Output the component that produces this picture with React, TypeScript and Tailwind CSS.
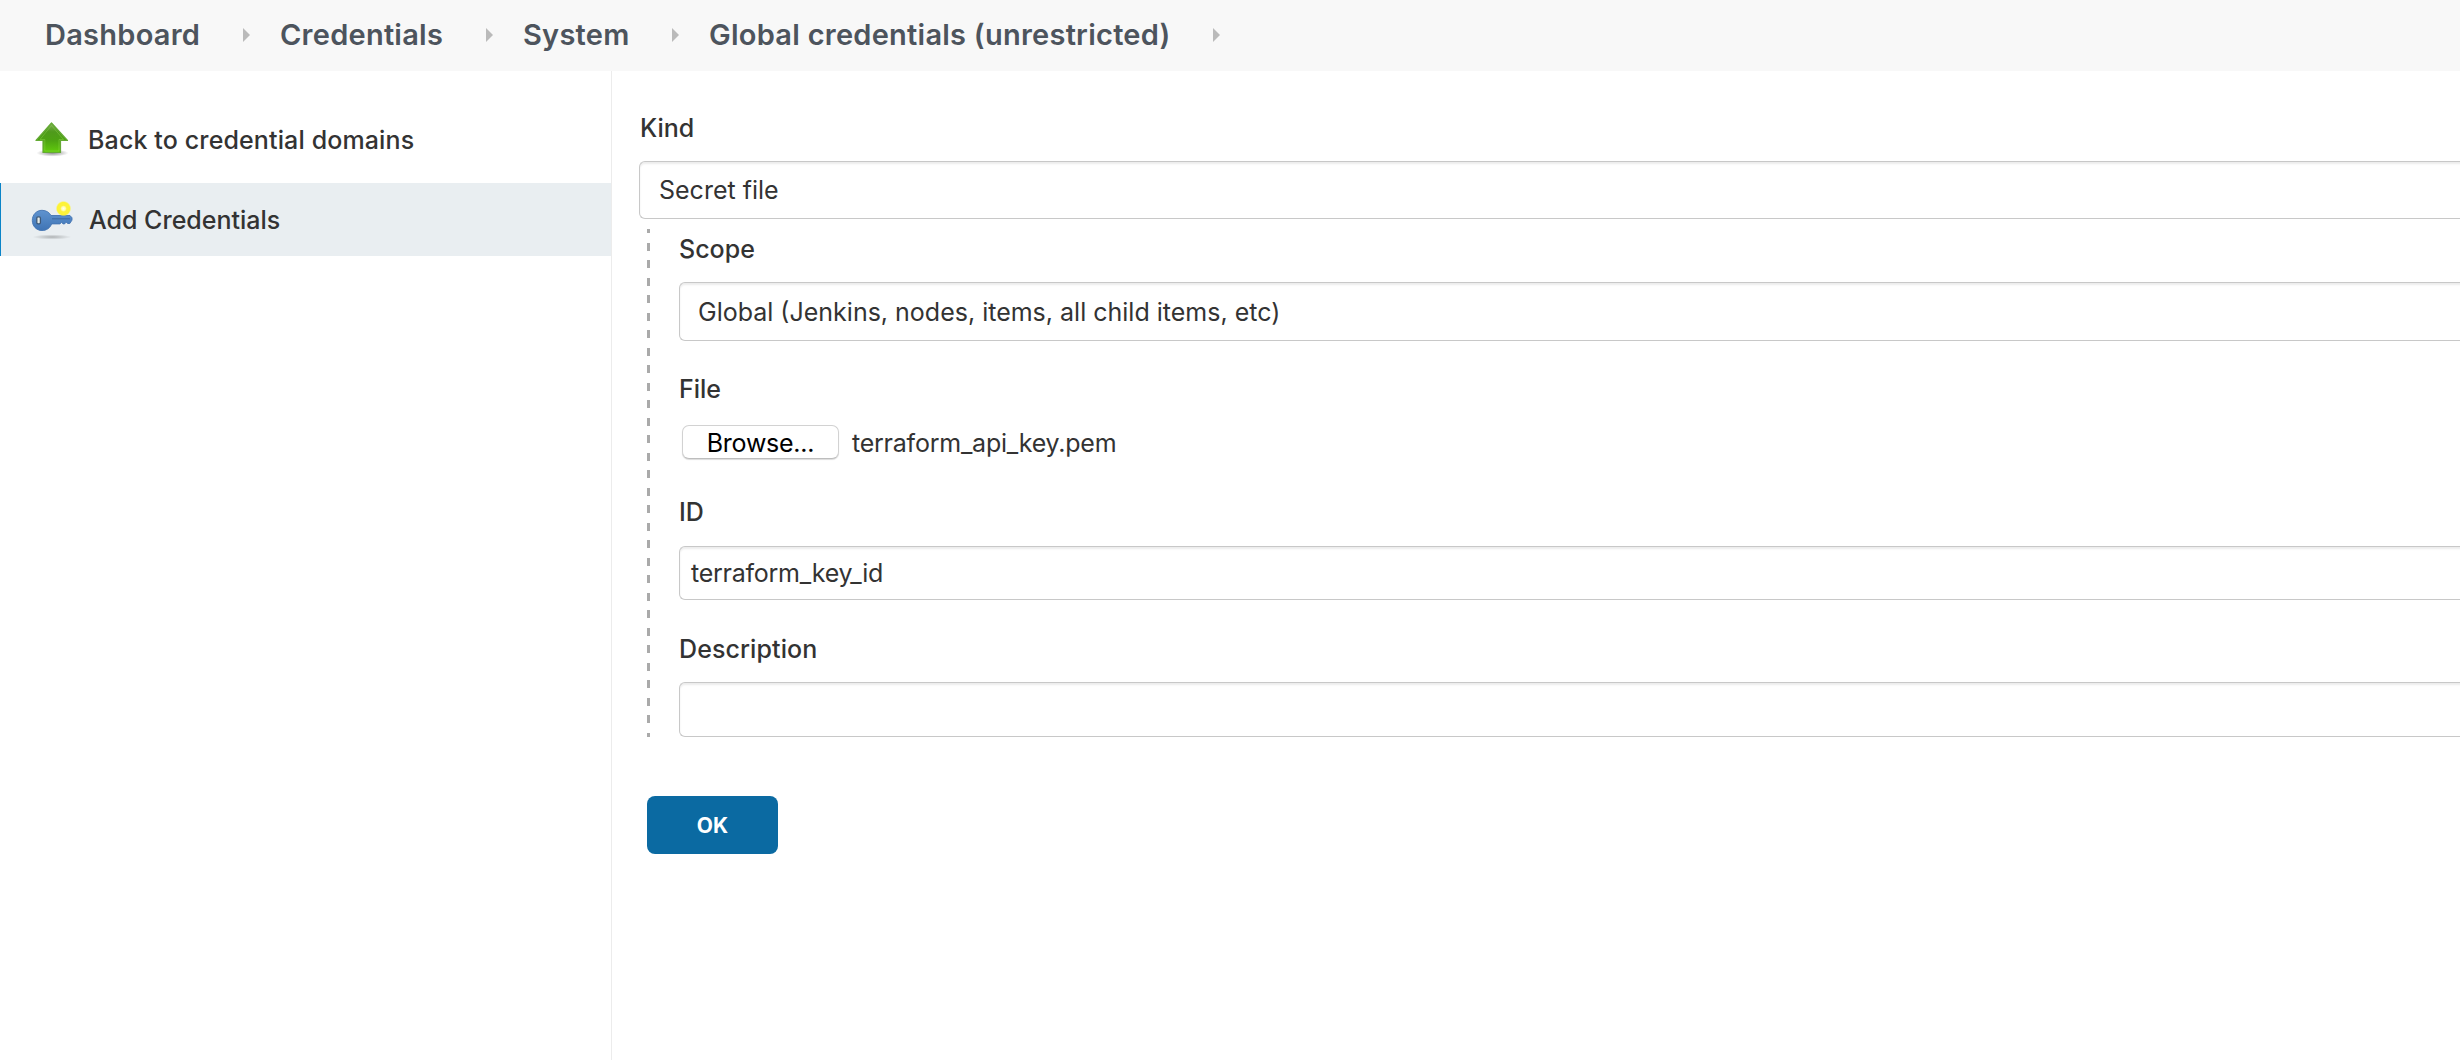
import React from 'react';

const crumbs = [
  { label: 'Dashboard', width: 'w-[198px]' },
  { label: 'Credentials', width: 'w-[206px]' },
  { label: 'System', width: 'w-[149px]' },
  { label: 'Global credentials (unrestricted)', width: 'w-[504px]' },
];

function UpArrowIcon() {
  return (
    <svg width="40" height="40" viewBox="0 0 40 40" className="shrink-0">
      <defs>
        <linearGradient id="arrowBody" x1="0" y1="0" x2="0" y2="1">
          <stop offset="0" stopColor="#7dad55" />
          <stop offset="0.3" stopColor="#4f9a1c" />
          <stop offset="0.6" stopColor="#4da312" />
          <stop offset="1" stopColor="#62cc0c" />
        </linearGradient>
        <radialGradient id="arrowShade">
          <stop offset="0" stopColor="#000" stopOpacity="0.45" />
          <stop offset="1" stopColor="#000" stopOpacity="0" />
        </radialGradient>
      </defs>
      <ellipse cx="20.5" cy="33" rx="16" ry="3.6" fill="url(#arrowShade)" />
      <path d="M19.5 3 L35.500 20.500 H28.500 V32.500 H11 V20.500 H4 Z" fill="url(#arrowBody)" stroke="#64aa34" strokeWidth="1.2" strokeLinejoin="round" />
      <path d="M12.800 31 V19.500 H8 L19.500 5.500 L31.500 19.500 H27 V31 Z" fill="none" stroke="#9be05a" strokeOpacity="0.35" strokeWidth="1" />
    </svg>
  );
}

function KeyIcon() {
  return (
    <svg width="42" height="42" viewBox="0 0 42 42" className="shrink-0">
      <defs>
        <linearGradient id="keyBody" x1="0" y1="0" x2="0" y2="1">
          <stop offset="0" stopColor="#5f93cf" />
          <stop offset="1" stopColor="#3f74b5" />
        </linearGradient>
        <radialGradient id="keyStar">
          <stop offset="0" stopColor="#fffff0" />
          <stop offset="0.25" stopColor="#fffcb0" />
          <stop offset="0.42" stopColor="#fdf23c" />
          <stop offset="0.8" stopColor="#fdf335" />
          <stop offset="1" stopColor="#fdf65a" stopOpacity="0" />
        </radialGradient>
        <radialGradient id="keyShade">
          <stop offset="0" stopColor="#000" stopOpacity="0.25" />
          <stop offset="1" stopColor="#000" stopOpacity="0" />
        </radialGradient>
      </defs>
      <ellipse cx="21" cy="38" rx="19.5" ry="2.6" fill="url(#keyShade)" />
      <path
        d="M11 11.300c4.300 0 7.400 2.200 9 5.200H39l2 2.300v2.300l-2.200 3.400h-2.200l-1.400-1.400-1.600 1.800h-1.600l-1.400-1.600-1.600 1.600H20.600c-1.400 4-5 6.600-9.600 6.600C5.400 31.500 1.300 27 1.300 21.400S5.400 11.300 11 11.300z"
        fill="url(#keyBody)"
        stroke="#4575b2"
        strokeWidth="0.9"
      />
      <path d="M21 19.800h18" stroke="#3f6ca6" strokeWidth="1.200" />
      <rect x="5.800" y="17.800" width="3.600" height="7" rx="1.200" fill="#e4e9e6" stroke="#3c5878" strokeWidth="1.300" />
      <circle cx="32.500" cy="9.600" r="7.800" fill="url(#keyStar)" />
    </svg>
  );
}

function Label({ children, className }: { children: React.ReactNode; className: string }) {
  return <div className={`text-[25px] leading-[30px] font-medium text-[#333] ${className}`}>{children}</div>;
}

function Field({ children, className }: { children?: React.ReactNode; className: string }) {
  return (
    <div
      className={`-mr-2 flex items-center rounded-l-[6px] border border-r-0 border-[#c8c8c8] bg-white text-[25px] leading-[30px] text-[#333] shadow-[inset_0_2px_2px_rgba(0,0,0,0.075)] ${className}`}
    >
      {children}
    </div>
  );
}

export default function App() {
  return (
    <div className="flex h-[1060px] w-[2460px] flex-col overflow-hidden bg-white font-['Inter',sans-serif]">
      <header className="flex h-[71px] shrink-0 items-center bg-[#f8f8f8] pb-[2px] pl-[45px] text-[29px] leading-[36px] font-semibold tracking-[0.25px] whitespace-nowrap text-[#4d545d]">
        {crumbs.map((c, i) => (
          <div key={c.label} className="flex items-center">
            <span className={`shrink-0 ${c.width}`}>{c.label}</span>
            <svg width="7" height="14" viewBox="0 0 7 14" className={i < 3 ? 'mr-[30px] shrink-0' : 'shrink-0'}>
              <path d="M0 0 L7 7 L0 14 Z" fill="#bababa" />
            </svg>
          </div>
        ))}
      </header>

      <div className="flex min-h-0 flex-1">
        <aside className="w-[612px] shrink-0 border-r border-[#ececec] pt-[32px] text-[25px] leading-[30px] font-medium text-[#333]">
          <div className="flex h-[73px] items-center pl-[32px]">
            <UpArrowIcon />
            <span className="ml-[16px] pt-px tracking-[0.13px]">Back to credential domains</span>
          </div>
          <div className="mt-[7px] flex h-[73px] items-center border-l border-[#0b84c8] bg-[#e9eef1] pl-[30px]">
            <KeyIcon />
            <span className="ml-[16px] pt-px">Add Credentials</span>
          </div>
        </aside>

        <main className="min-w-0 flex-1 pt-[42px] pl-[27px]">
          <Label className="pl-px">Kind</Label>
          <Field className="mt-[18px] h-[58px] pl-[19px]">Secret file</Field>

          <div className="mt-[10px] ml-[8px] flex h-[508px]">
            <div className="w-[3px] shrink-0 bg-[repeating-linear-gradient(180deg,#aaa_0px,#aaa_4px,transparent_4px,transparent_13.517px,#aaa_13.517px,#aaa_17.517px)]" />
            <div className="min-w-0 flex-1 pt-[5px] pl-[29px]">
              <Label className="">Scope</Label>
              <Field className="mt-[18px] h-[59px] pl-[18px]">Global (Jenkins, nodes, items, all child items, etc)</Field>

              <Label className="mt-[33px]">File</Label>
              <div className="mt-[20px] flex h-[36px] items-center">
                <div className="ml-[3px] flex h-[34px] w-[157px] items-center justify-center rounded-[7px] border border-[#d2d2d2] border-b-[#bdbdbd] bg-white text-[25px] leading-[30px] tracking-[-0.25px] text-black shadow-[0_1px_1px_rgba(0,0,0,0.14)]">
                  <span className="pt-px">Browse...</span>
                </div>
                <span className="ml-[13px] pt-px text-[25px] leading-[30px] tracking-[-0.23px] text-[#333]">
                  terraform_api_key.pem
                </span>
              </div>

              <Label className="mt-[37px]">ID</Label>
              <Field className="mt-[19px] h-[54px] pl-[11px] tracking-[-0.25px]">terraform_key_id</Field>

              <Label className="mt-[34px] tracking-[0.1px]">Description</Label>
              <Field className="mt-[18px] h-[55px]" />
            </div>
          </div>

          <button className="mt-[59px] ml-[8px] flex h-[58px] w-[131px] items-center justify-center rounded-[8px] bg-[#0b6aa2] pt-[2px] text-[21px] leading-[26px] font-bold text-white">
            OK
          </button>
        </main>
      </div>
    </div>
  );
}
